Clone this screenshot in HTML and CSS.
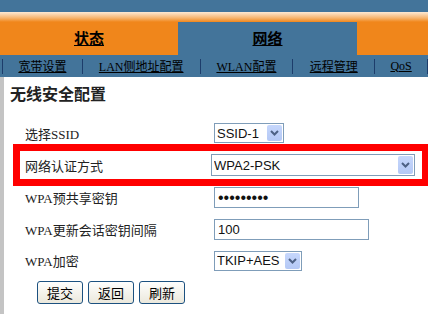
FILE: index.html
```html
<!DOCTYPE html>
<html lang="zh-CN">
<head>
    <meta charset="UTF-8">
    <title>无线安全配置</title>
    <link rel="stylesheet" href="styles.css">
</head>
<body>

<div class="topbar"></div>
<div class="glow"></div>
<div class="tabs">
    <div class="tab orange"><a href="#">状态</a></div>
    <div class="tab blue"><a href="#">网络</a></div>
    <div class="tab orange rest"></div>
</div>
<div class="subnav">
    <span class="sep"></span>
    <a href="#" class="w1">宽带设置</a>
    <span class="sep"></span>
    <a href="#" class="w2">LAN侧地址配置</a>
    <span class="sep"></span>
    <a href="#" class="w3">WLAN配置</a>
    <span class="sep"></span>
    <a href="#" class="w4">远程管理</a>
    <span class="sep"></span>
    <a href="#" class="w5">QoS</a>
    <span class="sep"></span>
</div>

<div class="content">
    <div class="title">无线安全配置</div>

    <div class="row r1">
        <label>选择SSID</label>
        <span class="sel" style="width: 70px">
            <select><option>SSID-1</option></select>
            <span class="arrow"><svg width="9" height="6" viewBox="0 0 9 6"><path d="M1 1 L4.5 4.5 L8 1" fill="none" stroke="#4d6185" stroke-width="2"/></svg></span>
        </span>
    </div>

    <div class="row mark">
        <label>网络认证方式</label>
        <span class="sel" style="width: 204px">
            <select><option>WPA2-PSK</option></select>
            <span class="arrow"><svg width="9" height="6" viewBox="0 0 9 6"><path d="M1 1 L4.5 4.5 L8 1" fill="none" stroke="#4d6185" stroke-width="2"/></svg></span>
        </span>
    </div>

    <div class="row r3">
        <label>WPA预共享密钥</label>
        <input type="password" class="txt pwd" style="width: 145px" value="12345678a">
    </div>

    <div class="row r4">
        <label>WPA更新会话密钥间隔</label>
        <input type="text" class="txt" style="width: 155px" value="100">
    </div>

    <div class="row r5">
        <label>WPA加密</label>
        <span class="sel" style="width: 88px">
            <select><option>TKIP+AES</option></select>
            <span class="arrow"><svg width="9" height="6" viewBox="0 0 9 6"><path d="M1 1 L4.5 4.5 L8 1" fill="none" stroke="#4d6185" stroke-width="2"/></svg></span>
        </span>
    </div>

    <div class="buttons">
        <button>提交</button>
        <button>返回</button>
        <button>刷新</button>
    </div>
</div>

</body>
</html>
```

FILE: styles.css
```css
body {
    margin: 0;
    width: 428px;
    font-family: "Liberation Serif", "Noto Sans CJK SC", serif;
    background-color: white;
    overflow: hidden;
}
.topbar {
    height: 12px;
    background-color: #43749a;
}
.glow {
    height: 10px;
    background: linear-gradient(#fde9d4, #f7b46e 60%, #f0861b);
}
.tabs {
    display: flex;
    height: 33px;
}
.tab {
    display: flex;
    justify-content: center;
    align-items: center;
    width: 178px;
}
.tab a {
    color: black;
    font-weight: bold;
    font-size: 15px;
    margin-top: -2px;
}
.tab.blue {
    width: 179px;
}
.tab.rest {
    flex: 1;
}
.orange {
    background-color: #f0861b;
}
.blue {
    background-color: #43749a;
}
.subnav {
    display: flex;
    align-items: center;
    height: 22px;
    background-color: #43749a;
    padding-left: 2px;
}
.subnav a {
    color: black;
    font-size: 12px;
    text-align: center;
}
.subnav .sep {
    width: 1px;
    height: 15px;
    background-color: #1d3d6b;
}
.w1 { width: 79px; }
.w2 { width: 117px; }
.w3 { width: 92px; }
.w4 { width: 81px; }
.w5 { width: 52px; }
.content {
    border-left: 4px solid #c4c4c4;
    padding: 9px 0 12px 6px;
}
.title {
    font-size: 16px;
    font-weight: bold;
    line-height: 18px;
    color: #222;
}
.row {
    display: flex;
    align-items: center;
    padding-left: 15px;
}
.row label {
    width: 189px;
    font-size: 13px;
    color: #222;
}
.r1 {
    margin-top: 19px;
    height: 20px;
}
.mark {
    margin: 1px 0 0 3px;
    width: 397px;
    height: 28px;
    padding-left: 5px;
    border: 7px solid red;
}
.mark label {
    width: 186px;
}
.r3 {
    margin-top: 1px;
    height: 21px;
}
.r4 {
    margin-top: 10px;
    height: 22px;
}
.r5 {
    margin-top: 10px;
    height: 21px;
}
.sel {
    position: relative;
    display: inline-block;
}
.sel select {
    appearance: none;
    width: 100%;
    height: 20px;
    border: 1px solid #7f9db9;
    border-radius: 0;
    background-color: white;
    font-family: "Liberation Sans", sans-serif;
    font-size: 13px;
    color: #111;
    padding: 0 0 0 2px;
    margin: 0;
}
.mark .sel select {
    height: 22px;
}
.arrow {
    position: absolute;
    right: 2px;
    top: 2px;
    bottom: 2px;
    width: 15px;
    display: flex;
    justify-content: center;
    align-items: center;
    background: linear-gradient(#c6d7fc, #b4c8f5);
    border-radius: 2px;
}
.txt {
    box-sizing: border-box;
    height: 21px;
    border: 1px solid #7f9db9;
    font-family: "Liberation Sans", sans-serif;
    font-size: 13px;
    color: #111;
    padding: 0 3px;
    margin: 0;
}
.pwd {
    font-size: 16px;
    letter-spacing: 0;
}
.buttons {
    display: flex;
    gap: 5px;
    margin: 10px 0 0 27px;
}
.buttons button {
    width: 46px;
    height: 23px;
    border: 1px solid #1c5180;
    border-radius: 3px;
    background: linear-gradient(#fefefd, #ebe8dc);
    font-family: "Noto Sans CJK SC", sans-serif;
    font-size: 13px;
    color: black;
    padding: 0;
}
```
